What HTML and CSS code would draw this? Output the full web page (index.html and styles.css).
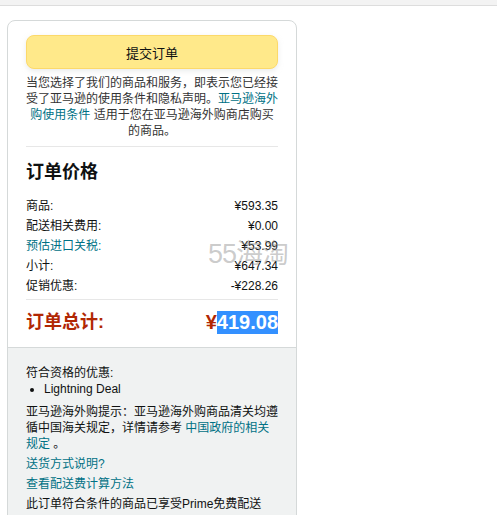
FILE: index.html
```html
<!DOCTYPE html>
<html lang="zh-CN">
<head>
<meta charset="utf-8">
<title>提交订单</title>
<link rel="stylesheet" href="styles.css">
</head>
<body>
<div class="topbar"></div>
<div class="card">
  <div class="card-main">
    <button class="place-order">提交订单</button>
    <p class="legal">当您选择了我们的商品和服务，即表示您已经接受了亚马逊的使用条件和隐私声明。<a href="#">亚马逊海外购使用条件</a> 适用于您在亚马逊海外购商店购买的商品。</p>
    <hr class="divider">
    <h2 class="title">订单价格</h2>
    <div class="rows">
      <div class="row"><span>商品:</span><span>¥593.35</span></div>
      <div class="row"><span>配送相关费用:</span><span>¥0.00</span></div>
      <div class="row"><a href="#">预估进口关税:</a><span>¥53.99</span></div>
      <div class="row"><span>小计:</span><span>¥647.34</span></div>
      <div class="row"><span>促销优惠:</span><span>-¥228.26</span></div>
    </div>
    <hr class="divider divider-total">
    <div class="total"><span class="total-label">订单总计:</span><span class="total-amount">¥<span class="selected">419.08</span></span></div>
    <div class="watermark">55海淘</div>
  </div>
  <div class="card-foot">
    <div class="line">符合资格的优惠:</div>
    <ul class="deals"><li>Lightning Deal</li></ul>
    <p class="note">亚马逊海外购提示：亚马逊海外购商品清关均遵循中国海关规定，详情请参考 <a href="#">中国政府的相关规定</a> 。</p>
    <a class="line link" href="#">送货方式说明?</a>
    <a class="line link" href="#">查看配送费计算方法</a>
    <div class="line">此订单符合条件的商品已享受Prime免费配送</div>
  </div>
</div>
</body>
</html>
```

FILE: styles.css
```css
html, body {
  margin: 0;
  padding: 0;
  background: #ffffff;
}
body {
  font-family: "Liberation Sans", "Noto Sans CJK SC", sans-serif;
  font-size: 12px;
  line-height: 16px;
  color: #0f1111;
}
a {
  color: #007185;
  text-decoration: none;
}
.topbar {
  height: 5px;
  background: #f3f3f3;
  border-bottom: 1px solid #dddddd;
}
.card {
  margin: 14px 0 0 7px;
  width: 288px;
  border: 1px solid #d5d9d9;
  border-radius: 8px;
  overflow: hidden;
}
.card-main {
  position: relative;
  padding: 14px 18px 13px;
}
.place-order {
  display: block;
  width: 100%;
  height: 34px;
  margin: 0;
  padding: 0;
  background: #ffe98a;
  border: 1px solid #fcd96a;
  border-radius: 8px;
  box-shadow: 0 2px 5px rgba(213, 217, 217, 0.5);
  font-family: inherit;
  font-size: 13px;
  color: #0f1111;
}
.legal {
  margin: 6px -1px 0;
  text-align: center;
  color: #333;
}
.divider {
  border: 0;
  border-top: 1px solid #e7e7e7;
  margin: 7px 0 0;
}
.title {
  margin: 13px 0 0;
  font-size: 18px;
  line-height: 24px;
  font-weight: 700;
}
.rows {
  margin-top: 12px;
  display: flex;
  flex-direction: column;
}
.row {
  display: flex;
  justify-content: space-between;
  height: 20px;
  line-height: 20px;
}
.divider-total {
  margin-top: 3px;
}
.total {
  display: flex;
  justify-content: space-between;
  align-items: center;
  margin-top: 10px;
  height: 24px;
  color: #b12704;
  font-weight: 700;
}
.total-label {
  font-size: 18px;
}
.total-amount {
  font-size: 20px;
  line-height: 23px;
}
.selected {
  background: #3390ff;
  color: #ffffff;
  display: inline-block;
  line-height: 23px;
}
.watermark {
  position: absolute;
  left: 200px;
  top: 218px;
  font-size: 27px;
  line-height: 30px;
  color: rgba(140, 140, 140, 0.45);
  letter-spacing: -1px;
  pointer-events: none;
}
.card-foot {
  background: #f0f2f2;
  border-top: 1px solid #d5d9d9;
  padding: 17px 18px 20px;
}
.line {
  display: block;
}
.deals {
  margin: 0;
  padding-left: 18px;
}
.note {
  margin: 7px 0 4px;
}
.link {
  margin-bottom: 4px;
}
```
